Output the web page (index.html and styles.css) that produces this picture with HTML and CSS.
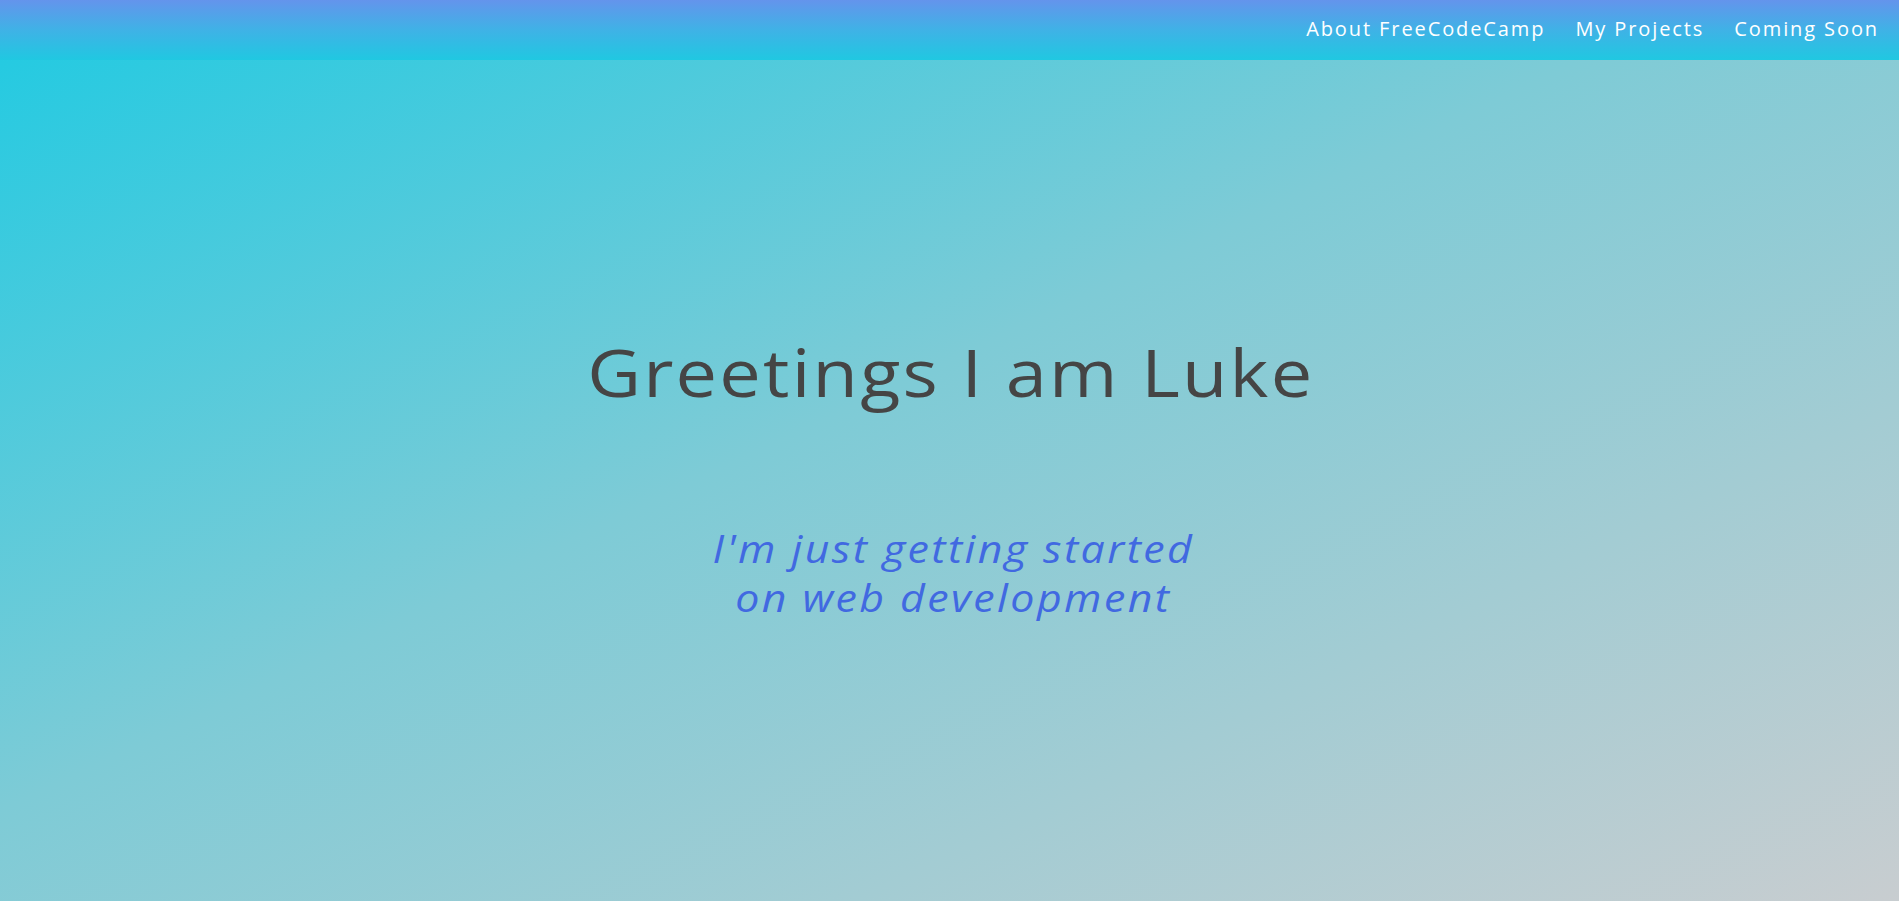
FILE: index.html
```html
<!DOCTYPE html>
<html lang="en">
<head>
<meta charset="utf-8">
<title>Luke</title>
<link rel="stylesheet" href="styles.css">
</head>
<body>
  <nav class="topnav">
    <a class="nav-link" href="#about">About FreeCodeCamp</a>
    <a class="nav-link" href="#projects">My Projects</a>
    <a class="nav-link" href="#soon">Coming Soon</a>
  </nav>
  <main class="hero">
    <h1 class="hero-title">Greetings I am Luke</h1>
    <p class="hero-sub">I'm just getting started<br>on web development</p>
  </main>
</body>
</html>
```
FILE: styles.css
```css
html, body {
  margin: 0;
  padding: 0;
  height: 100%;
}
body {
  font-family: "Open Sans", "Liberation Sans", sans-serif;
  background: linear-gradient(to bottom right, #1ecae2 0%, #7ecbd6 45%, #c8cdd0 100%);
  overflow: hidden;
}
.topnav {
  height: 60px;
  display: flex;
  justify-content: flex-end;
  align-items: flex-start;
  gap: 30px;
  padding-right: 20px;
  background: linear-gradient(to bottom, #6494ec 0%, #3fb2e6 50%, #20c8e1 100%);
}
.nav-link {
  color: #ffffff;
  text-decoration: none;
  font-size: 20px;
  line-height: 27px;
  letter-spacing: 1.9px;
  padding-top: 15px;
}
.hero {
  display: flex;
  flex-direction: column;
  align-items: center;
  text-align: center;
  padding-top: 266px;
}
.hero-title {
  margin: 0;
  font-size: 66px;
  font-weight: 400;
  line-height: 90px;
  letter-spacing: 2px;
  padding-left: 2px;
  color: #454545;
  transform: scaleX(1.12);
}
.hero-sub {
  margin: 107px 0 0;
  font-size: 39px;
  line-height: 49px;
  font-style: italic;
  letter-spacing: 2.2px;
  padding-left: 6px;
  color: #4169e1;
  transform: scaleX(1.1);
}
```
